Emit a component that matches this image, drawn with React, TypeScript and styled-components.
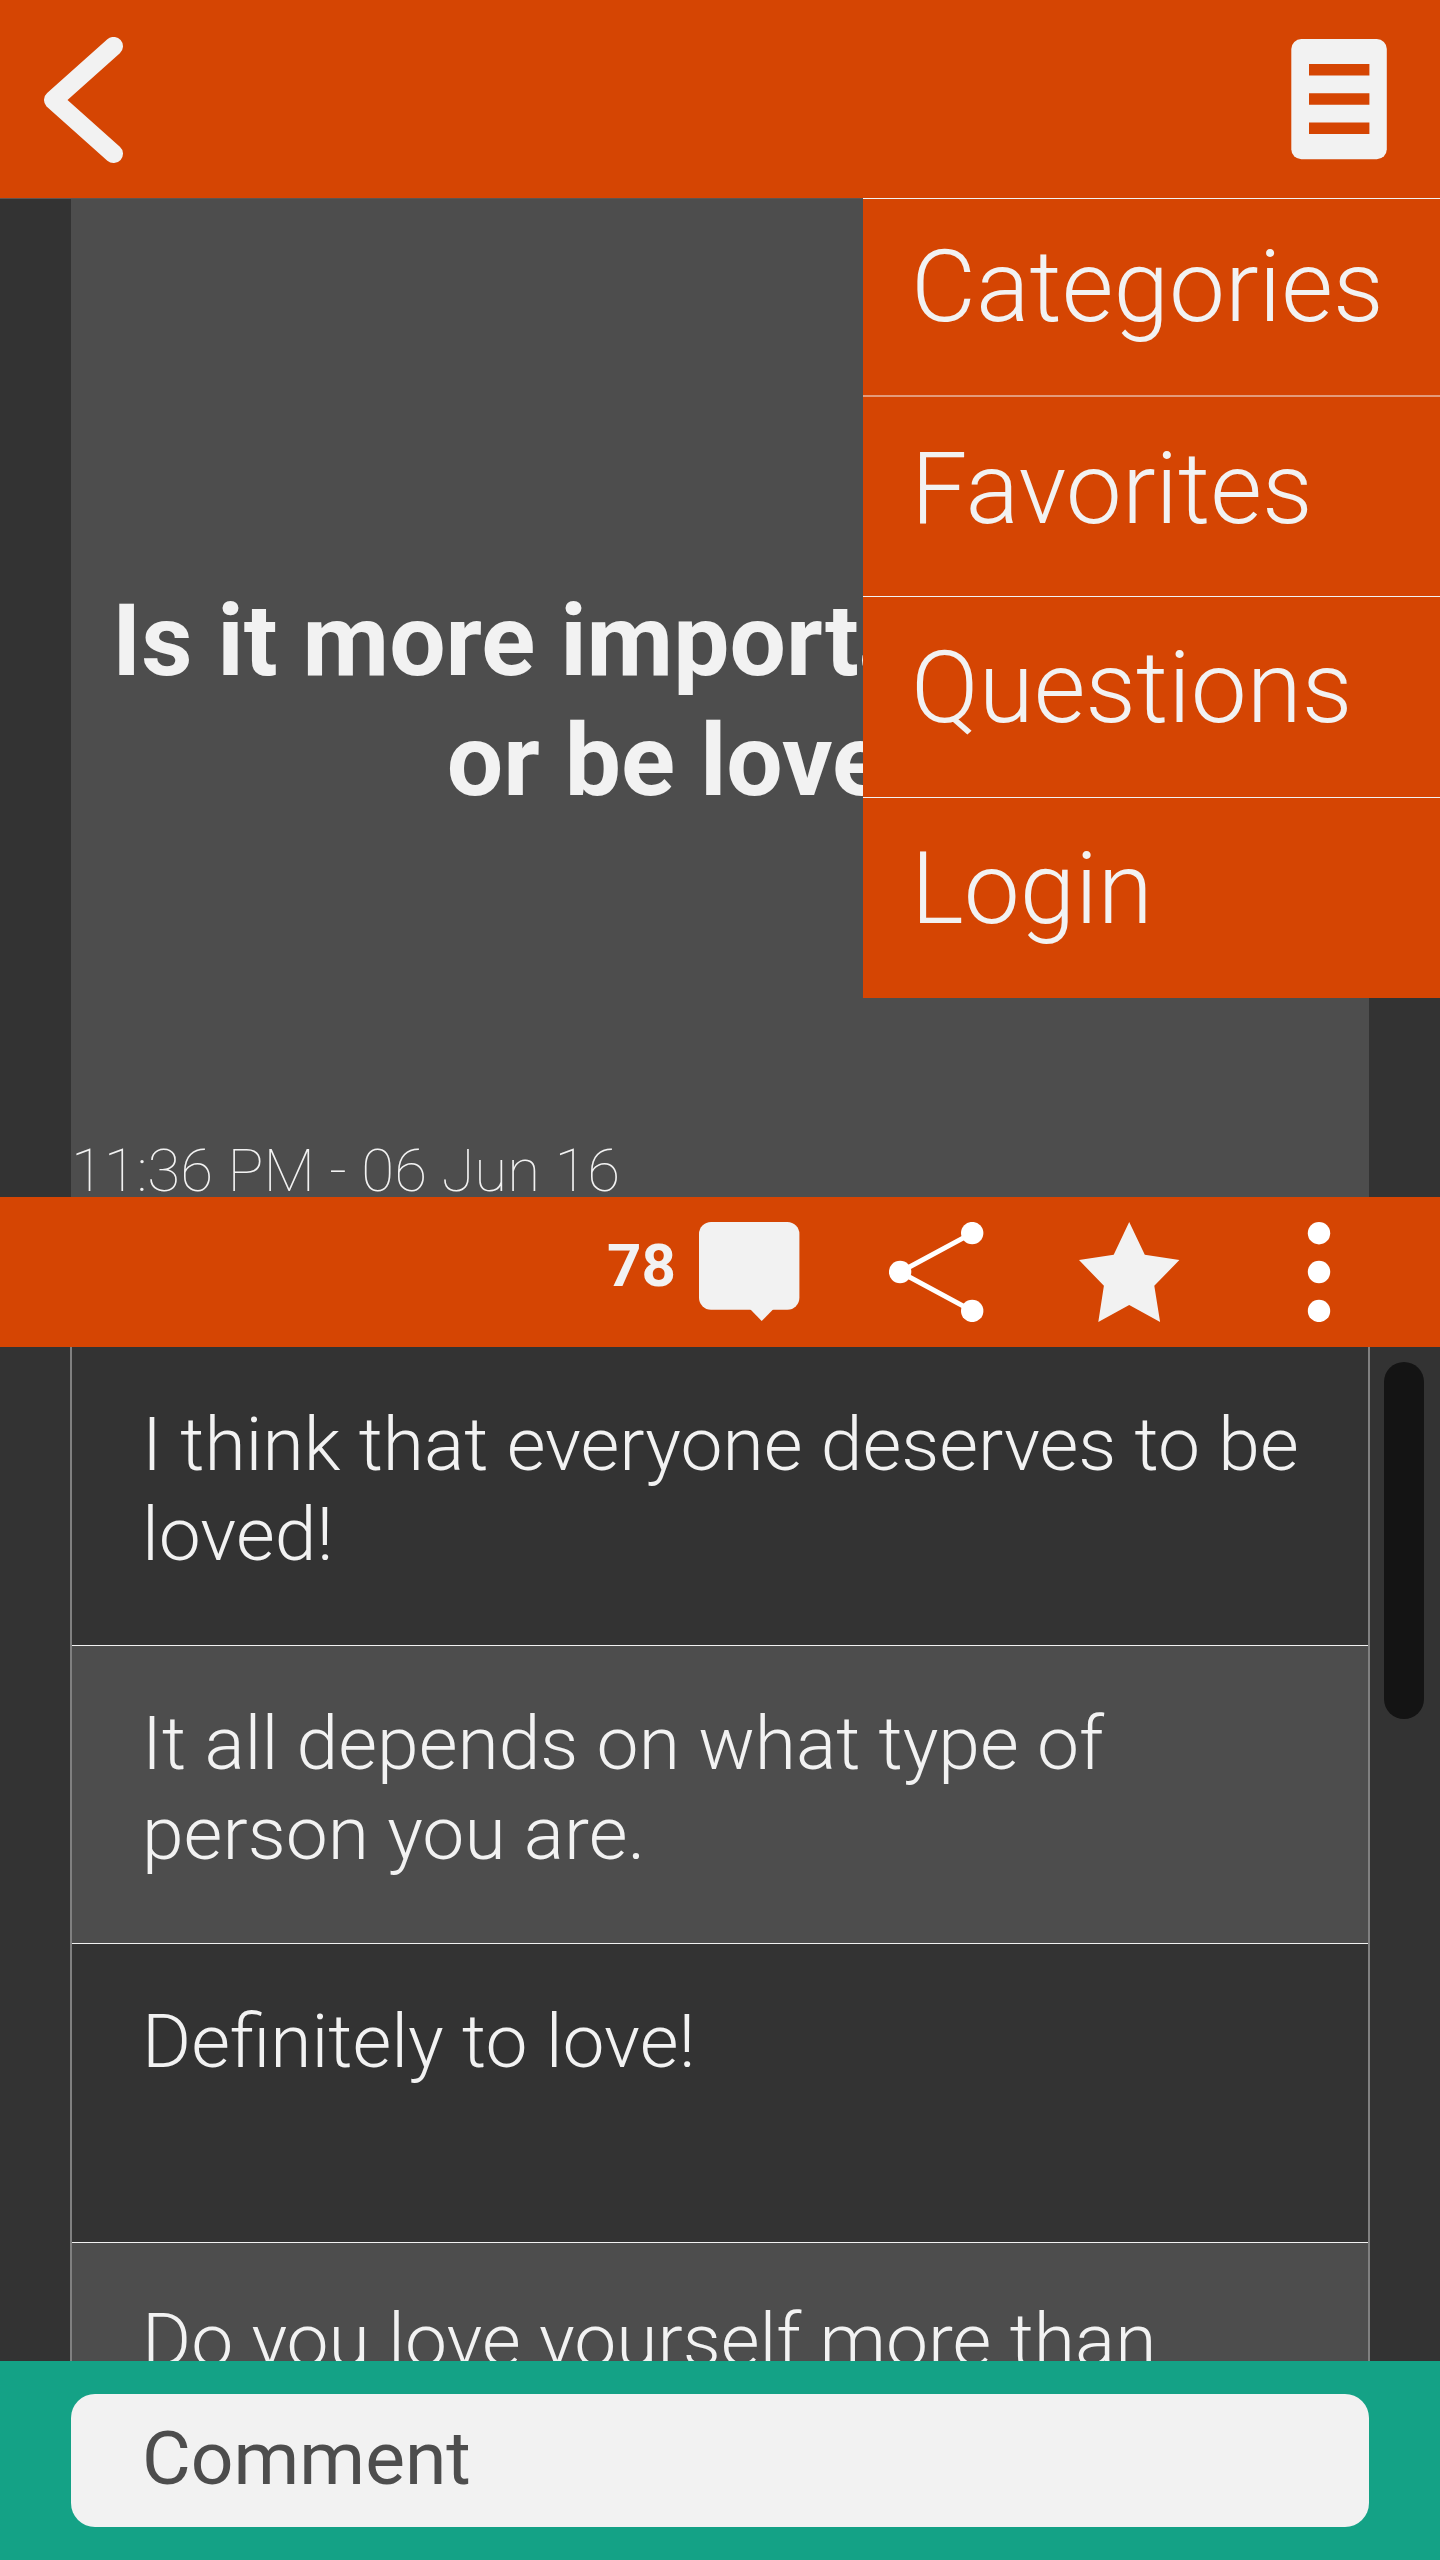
import React from "react";
import styled, { createGlobalStyle } from "styled-components";

const color = {
  orange: "#d54503",
  dark: "#333333",
  grey: "#4d4d4d",
  light: "#f2f2f2",
  rule: "#808080",
  teal: "#14a286",
};

const GlobalStyle = createGlobalStyle`
  * { box-sizing: border-box; }
  body { margin: 0; background: ${color.dark}; }
`;

const Screen = styled.div`
  position: relative;
  display: flex;
  flex-direction: column;
  width: 1440px;
  height: 2560px;
  overflow: hidden;
  background: ${color.dark};
  color: ${color.light};
  font-family: Roboto, sans-serif;
`;

const Header = styled.header`
  display: flex;
  justify-content: space-between;
  align-items: flex-start;
  flex: none;
  height: 199px;
  padding: 37px 53px 0 44px;
  background: ${color.orange};
  border-bottom: 1px solid #5f5450;
`;

const IconButton = styled.button`
  display: block;
  padding: 0;
  border: 0;
  background: none;
  line-height: 0;
`;

const Question = styled.section`
  display: flex;
  flex-direction: column;
  flex: none;
  height: 998px;
  margin: 0 71px;
  background: ${color.grey};
`;

const QuestionText = styled.h1`
  flex: 1;
  margin: 0;
  padding: 382px 1px 0 0;
  font-size: 100px;
  line-height: 120px;
  font-weight: 700;
  text-align: center;
  white-space: pre-line;
`;

const Timestamp = styled.time`
  height: 69px;
  font-size: 60px;
  line-height: 86px;
  font-weight: 100;
`;

const Actions = styled.div`
  display: flex;
  align-items: flex-start;
  flex: none;
  height: 150px;
  padding: 25px 109px 0 607px;
  background: ${color.orange};
`;

const Count = styled.span`
  width: 92px;
  padding-top: 1px;
  font-size: 60px;
  line-height: 86px;
  font-weight: 700;
`;

const ActionIcon = styled(IconButton)<{ $gap?: number }>`
  margin-left: ${(p) => p.$gap ?? 0}px;
`;

const Thread = styled.div`
  display: flex;
  flex: 1;
  min-height: 0;
  overflow: hidden;
  padding-left: 70px;
`;

const CommentList = styled.ul`
  width: 1300px;
  height: 1200px;
  margin: 0;
  padding: 0;
  list-style: none;
  border: solid ${color.rule};
  border-width: 0 2px;
`;

const CommentItem = styled.li<{ $alt?: boolean; $height: number }>`
  height: ${(p) => p.$height}px;
  padding: 52px 60px 0 70px;
  background: ${(p) => (p.$alt ? color.grey : color.dark)};
  border-bottom: 1px solid ${color.light};
  font-size: 75px;
  line-height: 90px;
  font-weight: 300;
  white-space: pre-line;
`;

const ScrollThumb = styled.div`
  width: 40px;
  height: 357px;
  margin: 15px 0 0 14.3px;
  border-radius: 20px;
  background: #141414;
`;

const Composer = styled.footer`
  flex: none;
  height: 199px;
  padding: 33px 71px;
  background: ${color.teal};
`;

const Field = styled.div`
  height: 133px;
  padding: 19px 71px 0;
  border-radius: 24px;
  background: ${color.light};
  color: ${color.grey};
  font-size: 75px;
  line-height: 90px;
  font-weight: 400;
`;

const Menu = styled.nav`
  position: absolute;
  top: 198px;
  right: 0;
  width: 577px;
  height: 800px;
  background: ${color.orange};
`;

const MenuItem = styled.div<{ $height: number; $top: number; $soft?: boolean }>`
  height: ${(p) => p.$height}px;
  padding: ${(p) => p.$top}px 0 0 48px;
  border-top: ${(p) => (p.$soft ? "2px solid #e49b7a" : `1px solid ${color.light}`)};
  font-size: 100px;
  line-height: 120px;
  font-weight: 300;
`;

const menu = [
  { label: "Categories", height: 197, top: 28 },
  { label: "Favorites", height: 201, top: 32, soft: true },
  { label: "Questions", height: 201, top: 31 },
  { label: "Login", height: 201, top: 31 },
];

const comments = [
  { text: "I think that everyone deserves to be\nloved!", height: 299 },
  { text: "It all depends on what type of\nperson you are.", height: 298 },
  { text: "Definitely to love!", height: 299 },
  { text: "Do you love yourself more than", height: 299 },
];

const BackIcon = () => (
  <svg width="80" height="127" viewBox="44 37 80 127">
    <path
      d="M113.6 46.3 53.4 100l60.2 53.7"
      fill="none"
      stroke={color.light}
      strokeWidth="18.8"
      strokeLinecap="round"
      strokeLinejoin="round"
    />
  </svg>
);

const MenuIcon = () => (
  <svg width="97" height="123" viewBox="1290 37 97 123">
    <rect x="1291.3" y="39" width="95.5" height="120.3" rx="10" fill={color.light} />
    <path
      d="M1309 64h60.4v11.5H1309zM1309 93.3h60.4v11.5H1309zM1309 122.5h60.4V134H1309z"
      fill={color.orange}
    />
  </svg>
);

const BubbleIcon = () => (
  <svg width="101" height="100" viewBox="699 1222 101 100">
    <rect x="699" y="1222" width="100.4" height="87.8" rx="12" fill={color.light} />
    <path d="M750 1309l11.7 12 11.8-12z" fill={color.light} />
  </svg>
);

const ShareIcon = () => (
  <svg width="95" height="100" viewBox="889 1222 95 100">
    <path d="M972.2 1233.1 900.1 1272l72.1 38.9" fill="none" stroke="#fff" strokeWidth="5" />
    <g fill="#fff">
      <circle cx="972.2" cy="1233.1" r="11.2" />
      <circle cx="900.1" cy="1272" r="11.2" />
      <circle cx="972.2" cy="1310.9" r="11.2" />
    </g>
  </svg>
);

const StarIcon = () => (
  <svg width="101" height="100" viewBox="1079 1222 101 100">
    <path
      d="M1129.2 1222l15.6 32.7 34.6 5.4-25.1 25.6 5.8 36.3-30.9-17-30.9 17 5.6-36.3-24.9-25.6 34.7-5.4z"
      fill={color.light}
    />
  </svg>
);

const MoreIcon = () => (
  <svg width="24" height="100" viewBox="1307 1222 24 100">
    <g fill="#fff">
      <circle cx="1319" cy="1233.2" r="11.2" />
      <circle cx="1319" cy="1272" r="11.2" />
      <circle cx="1319" cy="1310.9" r="11.2" />
    </g>
  </svg>
);

export default function App() {
  return (
    <Screen>
      <GlobalStyle />
      <Header>
        <IconButton aria-label="Back">
          <BackIcon />
        </IconButton>
        <IconButton aria-label="Menu">
          <MenuIcon />
        </IconButton>
      </Header>
      <Question>
        <QuestionText>{"Is it more important to love\nor be loved?"}</QuestionText>
        <Timestamp>11:36 PM - 06 Jun 16</Timestamp>
      </Question>
      <Actions>
        <Count>78</Count>
        <ActionIcon aria-label="Comments">
          <BubbleIcon />
        </ActionIcon>
        <ActionIcon aria-label="Share" $gap={89}>
          <ShareIcon />
        </ActionIcon>
        <ActionIcon aria-label="Favorite" $gap={95}>
          <StarIcon />
        </ActionIcon>
        <ActionIcon aria-label="More" $gap={127}>
          <MoreIcon />
        </ActionIcon>
      </Actions>
      <Thread>
        <CommentList>
          {comments.map((c, i) => (
            <CommentItem key={c.text} $alt={i % 2 === 1} $height={c.height}>
              {c.text}
            </CommentItem>
          ))}
        </CommentList>
        <ScrollThumb />
      </Thread>
      <Composer>
        <Field>Comment</Field>
      </Composer>
      <Menu>
        {menu.map((m) => (
          <MenuItem key={m.label} $height={m.height} $top={m.top} $soft={m.soft}>
            {m.label}
          </MenuItem>
        ))}
      </Menu>
    </Screen>
  );
}
